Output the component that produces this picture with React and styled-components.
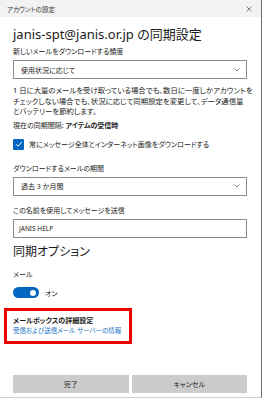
import React from "react";
import styled, { createGlobalStyle } from "styled-components";

const Global = createGlobalStyle`
  html, body { margin: 0; padding: 0; background: #ffffff; }
  body {
    font-family: "Noto Sans", "Noto Sans CJK JP", sans-serif;
    font-feature-settings: "palt";
    color: #1b1b1b;
  }
`;

const Window = styled.div`
  width: 262px;
  height: 398px;
  box-sizing: border-box;
  border-right: 1px solid #6f6f6f;
  border-bottom: 1px solid #cfcfcf;
  background: #fff;
  display: flex;
  flex-direction: column;
`;

const TitleBar = styled.div`
  height: 17px;
  background: #f2f2f2;
  display: flex;
  align-items: center;
  justify-content: space-between;
  padding: 0 9px 0 7px;
  flex-shrink: 0;
`;

const TitleText = styled.span`
  font-size: 6.5px;
  color: #333;
`;

const Close = styled.svg`
  width: 6px;
  height: 6px;
`;

const Body = styled.div`
  flex: 1;
  display: flex;
  flex-direction: column;
  padding: 0 14px 0 13px;
`;

const Heading = styled.h1`
  margin: 9px 0 0;
  font-size: 13px;
  font-weight: 400;
  line-height: 16px;
  color: #1b1b1b;
`;

const Label = styled.div`
  font-size: 7px;
  line-height: 10px;
  color: #222;
  margin-top: ${(p) => p.$mt || 0}px;
`;

const Field = styled.div`
  margin-top: 3px;
  height: 19px;
  flex-shrink: 0;
  box-sizing: border-box;
  border: 1px solid #8a8a8a;
  display: flex;
  align-items: center;
  justify-content: space-between;
  padding: 0 6px 0 ${(p) => (p.$input ? 5 : 7)}px;
  font-size: ${(p) => (p.$input ? 6.5 : 7)}px;
  color: #222;
`;

const Chevron = styled.svg`
  width: 6px;
  height: 4px;
`;

const Desc = styled.p`
  margin: 6px 0 0;
  font-size: 7.4px;
  line-height: 10.5px;
  color: #222;
  white-space: nowrap;
`;

const Interval = styled.div`
  margin-top: 4px;
  font-size: 7px;
  line-height: 10px;
  color: #222;
  b { font-weight: 700; }
`;

const CheckRow = styled.div`
  display: flex;
  align-items: center;
  gap: 5px;
  height: 11px;
  margin-top: 8px;
  font-size: 7px;
  color: #222;
`;

const Box = styled.span`
  width: 11px;
  height: 11px;
  border-radius: 1px;
  background: #0067c0;
  display: flex;
  align-items: center;
  justify-content: center;
`;

const Section = styled.h2`
  margin: 6px 0 0;
  font-size: 12px;
  font-weight: 400;
  line-height: 15px;
  color: #1b1b1b;
`;

const ToggleRow = styled.div`
  display: flex;
  align-items: center;
  gap: 6px;
  height: 11px;
  margin-top: 7.5px;
  font-size: 7px;
  color: #222;
`;

const Toggle = styled.span`
  width: 26px;
  height: 11px;
  border-radius: 6px;
  background: #0067c0;
  position: relative;
  &::after {
    content: "";
    position: absolute;
    right: 3px;
    top: 2.5px;
    width: 6px;
    height: 6px;
    border-radius: 50%;
    background: #fff;
  }
`;

const Highlight = styled.div`
  margin: 9.5px 0 0 -9px;
  width: 128px;
  height: 36px;
  flex-shrink: 0;
  box-sizing: border-box;
  border: 3px solid #ee0000;
  padding: 5px 0 0 6px;
  display: flex;
  flex-direction: column;
`;

const Strong = styled.div`
  font-size: 7px;
  font-weight: 700;
  line-height: 10px;
  color: #1b1b1b;
`;

const Link = styled.a`
  font-size: 6.5px;
  line-height: 10px;
  color: #1a73c8;
  text-decoration: none;
`;

const Footer = styled.div`
  margin-top: auto;
  margin-bottom: 4px;
  display: grid;
  grid-template-columns: 1fr 1fr;
  gap: 3px;
`;

const Button = styled.button`
  height: 18px;
  border: none;
  background: #cccccc;
  font-family: inherit;
  font-feature-settings: "palt";
  font-size: 7px;
  color: #1b1b1b;
  padding: 0;
`;

export default function App() {
  return (
    <>
      <Global />
      <Window>
        <TitleBar>
          <TitleText>アカウントの設定</TitleText>
          <Close viewBox="0 0 10 10">
            <path d="M1 1L9 9M9 1L1 9" stroke="#444" strokeWidth="1.1" />
          </Close>
        </TitleBar>
        <Body>
          <Heading>janis-spt@janis.or.jp の同期設定</Heading>
          <Label $mt={5}>新しいメールをダウンロードする頻度</Label>
          <Field>
            <span>使用状況に応じて</span>
            <Chevron viewBox="0 0 6 4">
              <path d="M0.5 0.5L3 3L5.5 0.5" fill="none" stroke="#666" strokeWidth="0.8" />
            </Chevron>
          </Field>
          <Desc>
            1 日に大量のメールを受け取っている場合でも、数日に一度しかアカウントを
            <br />
            チェックしない場合でも、状況に応じて同期設定を変更して、データ通信量
            <br />
            とバッテリーを節約します。
          </Desc>
          <Interval>
            現在の同期間隔: <b>アイテムの受信時</b>
          </Interval>
          <CheckRow>
            <Box>
              <svg width="8" height="8" viewBox="0 0 8 8">
                <path d="M1 4.2L3 6.2L7 1.8" fill="none" stroke="#fff" strokeWidth="1" />
              </svg>
            </Box>
            <span>常にメッセージ全体とインターネット画像をダウンロードする</span>
          </CheckRow>
          <Label $mt={14}>ダウンロードするメールの期間</Label>
          <Field>
            <span>過去 3 か月間</span>
            <Chevron viewBox="0 0 6 4">
              <path d="M0.5 0.5L3 3L5.5 0.5" fill="none" stroke="#666" strokeWidth="0.8" />
            </Chevron>
          </Field>
          <Label $mt={10}>この名前を使用してメッセージを送信</Label>
          <Field $input>
            <span>JANIS HELP</span>
          </Field>
          <Section>同期オプション</Section>
          <Label $mt={11}>メール</Label>
          <ToggleRow>
            <Toggle />
            <span>オン</span>
          </ToggleRow>
          <Highlight>
            <Strong>メールボックスの詳細設定</Strong>
            <Link href="#">受信および送信メール サーバーの情報</Link>
          </Highlight>
          <Footer>
            <Button>完了</Button>
            <Button>キャンセル</Button>
          </Footer>
        </Body>
      </Window>
    </>
  );
}
